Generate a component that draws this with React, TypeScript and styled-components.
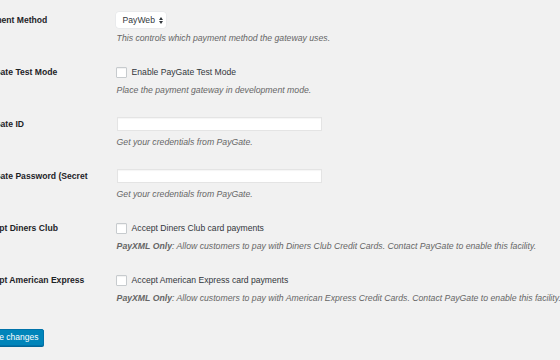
import React from "react";
import styled, { createGlobalStyle } from "styled-components";

const Global = createGlobalStyle`
  html, body { margin: 0; padding: 0; background: #f1f1f1; }
  body { font-family: "Liberation Sans", Arial, sans-serif; color: #23282d; overflow: hidden; }
`;

const Page = styled.div`
  width: 560px;
  height: 360px;
  overflow: hidden;
  background: #f1f1f1;
`;

const Form = styled.form`
  margin-left: -21.4px;
  padding-top: 11px;
  display: flex;
  flex-direction: column;
`;

const Row = styled.div`
  display: flex;
  align-items: flex-start;
  height: 52px;
`;

const Label = styled.div`
  width: 137px;
  flex: none;
  font-size: 8.6px;
  font-weight: 700;
  line-height: 18px;
  color: #1d2327;
  white-space: nowrap;
  overflow: hidden;
`;

const Field = styled.div`
  display: flex;
  flex-direction: column;
`;

const Line = styled.div`
  height: 18px;
  display: flex;
  align-items: center;
  font-size: 8.6px;
  color: #32373c;
  white-space: nowrap;
`;

const Desc = styled.p`
  margin: 3px 0 0 1px;
  font-size: 8.7px;
  line-height: 12px;
  font-style: italic;
  color: #666;
  white-space: nowrap;
`;

const Select = styled.div`
  height: 16px;
  box-sizing: border-box;
  padding: 0 3px 0 7px;
  display: flex;
  align-items: center;
  gap: 4px;
  background: #fff;
  border-radius: 3px;
  box-shadow: 0 0 0 0.5px #e2e4e7;
  font-size: 8.6px;
  color: #32373c;
`;

const Arrows = styled.span`
  display: inline-flex;
  flex-direction: column;
  gap: 1px;
`;

const Check = styled.span`
  width: 11px;
  height: 11px;
  box-sizing: border-box;
  border: 1px solid #c7cbce;
  border-radius: 1px;
  background: #fff;
  box-shadow: inset 0 1px 1px rgba(0, 0, 0, 0.06);
  margin-right: 5px;
`;

const Input = styled.div`
  width: 205px;
  height: 14px;
  margin-left: 1px;
  box-sizing: border-box;
  background: #fff;
  border: 1px solid #e4e4e4;
  box-shadow: inset 0 1px 1px rgba(0, 0, 0, 0.04);
`;

const Button = styled.button`
  margin-top: 6px;
  align-self: flex-start;
  height: 17px;
  padding: 0 5px;
  font-family: "Liberation Sans", Arial, sans-serif;
  font-size: 8.5px;
  color: #fff;
  background: #0085ba;
  border: 1px solid #0073aa;
  border-radius: 2px;
  box-shadow: 0 1px 0 #006799;
  line-height: 15px;
`;

const Strong = styled.b`
  font-weight: 700;
`;

const UpDown = () => (
  <Arrows>
    <svg width="4" height="3" viewBox="0 0 4 3"><path d="M0 3 L2 0 L4 3Z" fill="#32373c" /></svg>
    <svg width="4" height="3" viewBox="0 0 4 3"><path d="M0 0 L2 3 L4 0Z" fill="#32373c" /></svg>
  </Arrows>
);

export default function App() {
  return (
    <Page>
      <Global />
      <Form>
        <Row>
          <Label>Payment Method</Label>
          <Field>
            <Line>
              <Select>PayWeb <UpDown /></Select>
            </Line>
            <Desc>This controls which payment method the gateway uses.</Desc>
          </Field>
        </Row>
        <Row>
          <Label>PayGate Test Mode</Label>
          <Field>
            <Line><Check />Enable PayGate Test Mode</Line>
            <Desc>Place the payment gateway in development mode.</Desc>
          </Field>
        </Row>
        <Row>
          <Label>PayGate ID</Label>
          <Field>
            <Line><Input /></Line>
            <Desc>Get your credentials from PayGate.</Desc>
          </Field>
        </Row>
        <Row>
          <Label>PayGate Password (Secret</Label>
          <Field>
            <Line><Input /></Line>
            <Desc>Get your credentials from PayGate.</Desc>
          </Field>
        </Row>
        <Row>
          <Label>Accept Diners Club</Label>
          <Field>
            <Line><Check />Accept Diners Club card payments</Line>
            <Desc><Strong>PayXML Only</Strong>: Allow customers to pay with Diners Club Credit Cards. Contact PayGate to enable this facility.</Desc>
          </Field>
        </Row>
        <Row>
          <Label>Accept American Express</Label>
          <Field>
            <Line><Check />Accept American Express card payments</Line>
            <Desc><Strong>PayXML Only</Strong>: Allow customers to pay with American Express Credit Cards. Contact PayGate to enable this facility.</Desc>
          </Field>
        </Row>
        <Button type="button">Save changes</Button>
      </Form>
    </Page>
  );
}
